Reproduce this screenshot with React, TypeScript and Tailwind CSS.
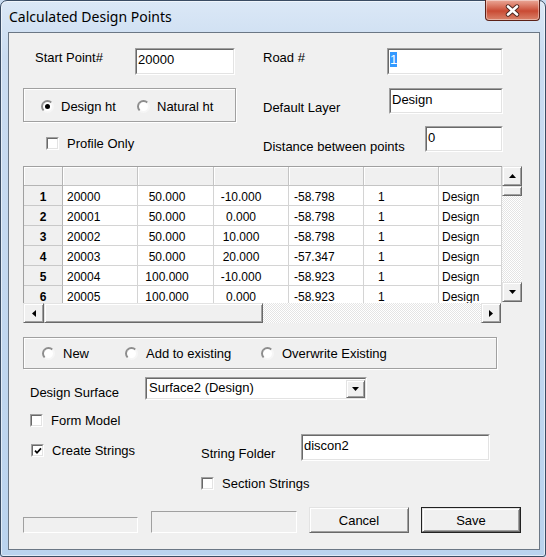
import React from 'react'

// grid contents
const rows = [
  ['20000', '50.000', '-10.000', '-58.798', '1', 'Design'],
  ['20001', '50.000', '0.000', '-58.798', '1', 'Design'],
  ['20002', '50.000', '10.000', '-58.798', '1', 'Design'],
  ['20003', '50.000', '20.000', '-57.347', '1', 'Design'],
  ['20004', '100.000', '-10.000', '-58.923', '1', 'Design'],
  ['20005', '100.000', '0.000', '-58.923', '1', 'Design'],
]

const cols = [
  { w: 'w-[75px]', cls: 'pl-[4px]' },
  { w: 'w-[76px]', cls: 'justify-center pr-[17px]' },
  { w: 'w-[75px]', cls: 'justify-center pr-[20px]' },
  { w: 'w-[75px]', cls: 'pl-[5px]' },
  { w: 'w-[75px]', cls: 'pl-[14px]' },
  { w: 'w-[63px]', cls: 'pl-[3px]' },
]

function Edit({ className = '', children }: { className?: string; children?: React.ReactNode }) {
  return (
    <div className={`shrink-0 border border-t-[#a0a0a0] border-l-[#a0a0a0] border-r-white border-b-white ${className}`}>
      <div className="h-full w-full border border-t-[#696969] border-l-[#696969] border-r-[#e3e3e3] border-b-[#e3e3e3] bg-white pl-[1px] pt-[2px]">
        {children}
      </div>
    </div>
  )
}

function Check({ checked = false }: { checked?: boolean }) {
  return (
    <div className="h-[13px] w-[13px] shrink-0 border border-t-[#a0a0a0] border-l-[#a0a0a0] border-r-white border-b-white">
      <div className="flex h-full w-full items-center justify-center border border-t-[#696969] border-l-[#696969] border-r-[#e3e3e3] border-b-[#e3e3e3] bg-white">
        {checked && (
          <svg width="8" height="8" viewBox="0 0 8 8">
            <path d="M1 3.6 L3 5.8 L7 1.4" stroke="#000" strokeWidth="1.7" fill="none" />
          </svg>
        )}
      </div>
    </div>
  )
}

function Radio({ checked = false }: { checked?: boolean }) {
  return (
    <div className="flex h-[13px] w-[13px] shrink-0 items-center justify-center rounded-full border-2 border-t-[#8d8d8d] border-l-[#8d8d8d] border-r-[#f6f6f6] border-b-[#f6f6f6] bg-white">
      {checked && <div className="h-[5px] w-[5px] rounded-full bg-black" />}
    </div>
  )
}

function Raised({ className = '', children }: { className?: string; children?: React.ReactNode }) {
  return (
    <div
      className={`flex shrink-0 items-center justify-center border border-t-[#e3e3e3] border-l-[#e3e3e3] border-r-[#696969] border-b-[#696969] bg-[#f0f0f0] shadow-[inset_1px_1px_0_#fff,inset_-1px_-1px_0_#a0a0a0] ${className}`}
    >
      {children}
    </div>
  )
}

const Track = ({ className = '' }: { className?: string }) => (
  <div className={`bg-[#f4f4f4] bg-[repeating-conic-gradient(#ffffff_0%_25%,#e4e4e4_0%_50%)] bg-[length:2px_2px] ${className}`} />
)

const ArrowUp = () => (
  <svg width="7" height="4" viewBox="0 0 7 4"><polygon points="3.5,0 7,4 0,4" fill="#000" /></svg>
)
const ArrowDown = () => (
  <svg width="7" height="4" viewBox="0 0 7 4"><polygon points="0,0 7,0 3.5,4" fill="#000" /></svg>
)
const ArrowLeft = () => (
  <svg width="4" height="7" viewBox="0 0 4 7"><polygon points="4,0 4,7 0,3.5" fill="#000" /></svg>
)
const ArrowRight = () => (
  <svg width="4" height="7" viewBox="0 0 4 7"><polygon points="0,0 4,3.5 0,7" fill="#000" /></svg>
)

function CloseButton() {
  return (
    <div className="-mt-px ml-auto mr-[5px] flex h-[21px] w-[55px] items-center justify-center rounded-b-[4px] border border-t-0 border-[#5b2118] bg-linear-to-b from-[#eaa898] via-[#c94a33] via-55% to-[#d9826a] shadow-[inset_0_0_0_1px_rgba(255,255,255,0.4)]">
      <svg width="15" height="13" viewBox="0 0 15 13">
        <path d="M3 2.5 L12 10.5 M12 2.5 L3 10.5" stroke="#4a2620" strokeWidth="4.4" strokeLinecap="round" />
        <path d="M3 2.5 L12 10.5 M12 2.5 L3 10.5" stroke="#fff" strokeWidth="2.6" strokeLinecap="round" />
      </svg>
    </div>
  )
}

function Grid() {
  return (
    <div className="w-[499px]">
      <div className="flex">
        {/* table */}
        <div className="h-[137px] w-[479px] overflow-hidden border-l border-t border-[#a0a0a0] bg-white text-[12px] leading-[14px]">
          <div className="flex h-[19px]">
            <div className="w-[39px] border-b border-r border-[#b4b4b4] bg-[#f0f0f0] shadow-[inset_1px_1px_0_#fff]" />
            {cols.map((c, i) => (
              <div key={i} className={`${c.w} border-b border-r border-[#c4c4c4] bg-[#f0f0f0] shadow-[inset_1px_1px_0_#fff]`} />
            ))}
          </div>
          {rows.map((r, ri) => (
            <div key={ri} className="flex h-[20px]">
              <div className="flex w-[39px] items-center justify-center border-b border-r border-b-[#c8c8c8] border-r-[#b4b4b4] bg-[#f0f0f0] pt-[3px] font-bold">
                {ri + 1}
              </div>
              {r.map((v, ci) => (
                <div key={ci} className={`flex items-center border-b border-r border-[#d4d4d4] pt-[3px] ${cols[ci].w} ${cols[ci].cls}`}>
                  {v}
                </div>
              ))}
            </div>
          ))}
        </div>
        {/* vertical scrollbar */}
        <div className="flex h-[136px] w-[20px] flex-col">
          <Raised className="h-[20px] w-[20px]"><ArrowUp /></Raised>
          <Raised className="h-[10px] w-[20px]" />
          <Track className="flex-1" />
          <Raised className="h-[20px] w-[20px]"><ArrowDown /></Raised>
        </div>
      </div>
      {/* horizontal scrollbar */}
      <div className="flex h-[20px] w-[478px]">
        <Raised className="h-[20px] w-[21px]"><ArrowLeft /></Raised>
        <Raised className="h-[20px] w-[219px]" />
        <Track className="flex-1" />
        <Raised className="h-[20px] w-[20px]"><ArrowRight /></Raised>
      </div>
    </div>
  )
}

const groupBox = 'border border-[#a0a0a0] shadow-[inset_1px_1px_0_#fff,1px_1px_0_#fff]'

export default function App() {
  return (
    <div className="h-[557px] w-[546px] overflow-hidden bg-[#c9dcf1] font-['Liberation_Sans',Arial,sans-serif] text-[13px] leading-[15px] text-black">
      <div className="flex h-[557px] w-[546px] flex-col rounded-t-[7px] rounded-b-[3px] border border-[#3a4c63] bg-linear-to-b from-[#dbe8f6] via-[#cadcf1] via-10% to-[#bad3ee] shadow-[inset_0_0_0_1px_rgba(255,255,255,0.55)]">
        {/* title bar */}
        <div className="flex h-[31px] shrink-0 items-start">
          <div className="pl-[8px] pt-[6px] font-['Noto_Sans',sans-serif] text-[14px] leading-[19px]">Calculated Design Points</div>
          <CloseButton />
        </div>

        {/* client area */}
        <div className="ml-[7px] h-[518px] w-[532px] shrink-0 border border-[#6b7785] bg-[#f0f0f0] pl-[14px] pt-[15px]">
          {/* top fields */}
          <div className="flex h-[118px]">
            <div className="w-[213px]">
              <div className="flex h-[27px]">
                <div className="w-[112px] pl-[12px] pt-[2px]">Start Point#</div>
                <Edit className="h-[27px] w-[100px]">20000</Edit>
              </div>
              <div className={`mt-[13px] flex h-[34px] w-[213px] items-center pl-[17px] pt-[2px] ${groupBox}`}>
                <div className="flex w-[96px] items-center gap-[7px]">
                  <Radio checked />
                  <span>Design ht</span>
                </div>
                <div className="flex items-center gap-[7px]">
                  <Radio />
                  <span>Natural ht</span>
                </div>
              </div>
              <div className="mt-[14px] flex items-center gap-[8px] pl-[23px]">
                <Check />
                <span>Profile Only</span>
              </div>
            </div>

            <div className="ml-[27px] w-[240px]">
              <div className="flex h-[27px]">
                <div className="w-[124px] pt-[2px]">Road #</div>
                <Edit className="h-[27px] w-[116px]">
                  <span className="bg-[#3399ff] text-white">1</span>
                </Edit>
              </div>
              <div className="mt-[13px] flex h-[26px]">
                <div className="w-[126px] pt-[12px]">Default Layer</div>
                <Edit className="h-[26px] w-[114px]">Design</Edit>
              </div>
              <div className="mt-[12px] flex h-[26px]">
                <div className="w-[162px] pt-[13px]">Distance between points</div>
                <Edit className="h-[26px] w-[78px]">0</Edit>
              </div>
            </div>
          </div>

          <Grid />

          {/* output mode */}
          <div className={`mt-[14px] flex h-[32px] w-[474px] items-center pl-[18px] ${groupBox}`}>
            <div className="flex w-[83px] items-center gap-[8px]">
              <Radio />
              <span>New</span>
            </div>
            <div className="flex w-[136px] items-center gap-[8px]">
              <Radio />
              <span>Add to existing</span>
            </div>
            <div className="flex items-center gap-[8px]">
              <Radio />
              <span>Overwrite Existing</span>
            </div>
          </div>

          <div className="mt-[8px] flex h-[23px]">
            <div className="w-[122px] pl-[7px] pt-[8px]">Design Surface</div>
            <div className="h-[23px] w-[222px] border border-t-[#a0a0a0] border-l-[#a0a0a0] border-r-white border-b-white">
              <div className="flex h-full w-full items-start justify-between border border-t-[#696969] border-l-[#696969] border-r-[#e3e3e3] border-b-[#e3e3e3] bg-white">
                <span className="pl-[2px] pt-[1px]">Surface2 (Design)</span>
                <Raised className="mt-px h-[18px] w-[19px]"><ArrowDown /></Raised>
              </div>
            </div>
          </div>

          <div className="mt-[13px] flex items-center gap-[8px] pl-[7px]">
            <Check />
            <span>Form Model</span>
          </div>

          <div className="mt-[6px] flex h-[27px] items-start">
            <div className="flex w-[178px] items-center gap-[8px] pl-[8px] pt-[9px]">
              <Check checked />
              <span>Create Strings</span>
            </div>
            <div className="w-[100px] pt-[12px]">String Folder</div>
            <Edit className="h-[27px] w-[189px]">discon2</Edit>
          </div>

          <div className="mt-[15px] flex items-center gap-[8px] pl-[178px]">
            <Check />
            <span>Section Strings</span>
          </div>

          {/* status + buttons */}
          <div className="mt-[16px] flex h-[26px] items-end">
            <div className="h-[16px] w-[115px] border border-t-[#a0a0a0] border-l-[#a0a0a0] border-r-white border-b-white" />
            <div className="ml-[13px] h-[22px] w-[146px] border border-t-[#a0a0a0] border-l-[#a0a0a0] border-r-white border-b-white" />
            <Raised className="ml-[12px] h-[26px] w-[100px]">Cancel</Raised>
            <div className="ml-[12px] h-[26px] w-[100px] border border-[#222]">
              <Raised className="h-full w-full">Save</Raised>
            </div>
          </div>
        </div>
      </div>
    </div>
  )
}
